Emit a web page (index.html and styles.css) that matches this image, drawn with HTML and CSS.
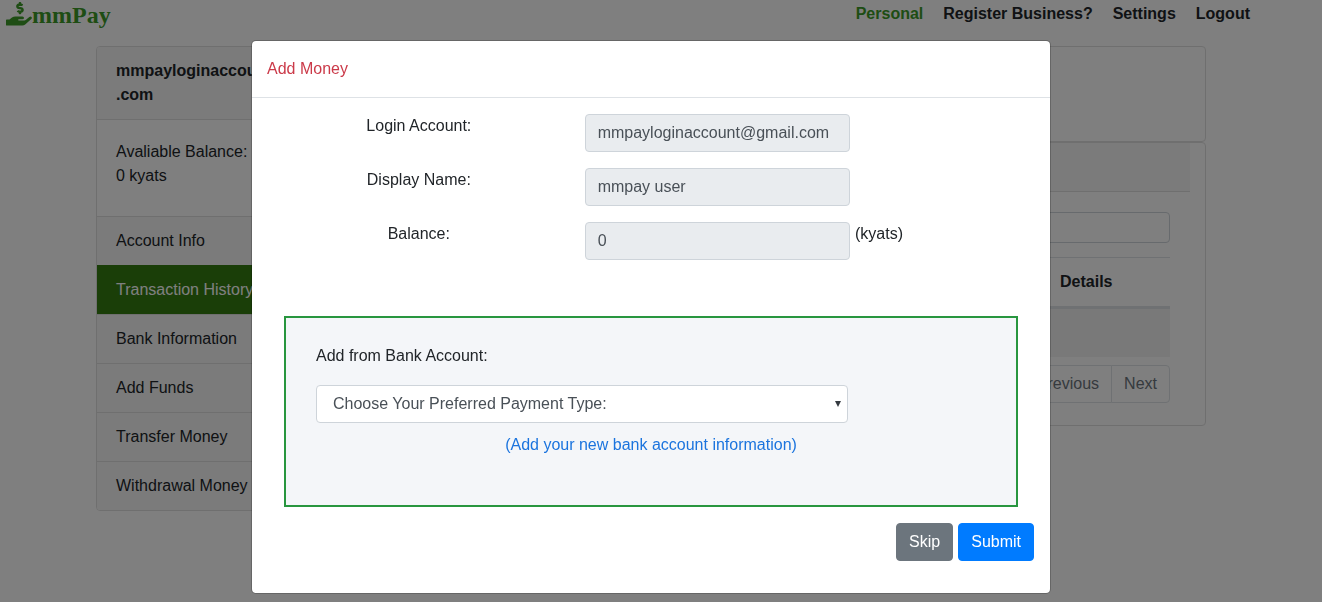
FILE: index.html
```html
<!DOCTYPE html>
<html lang="en">
<head>
<meta charset="utf-8">
<meta name="viewport" content="width=device-width, initial-scale=1">
<title>mmPay</title>
<link rel="stylesheet" href="styles.css">
</head>
<body>
<div class="page">
  <header class="topbar">
    <a class="brand" href="#">
      <svg class="brand-icon" viewBox="0 0 26 25" aria-hidden="true"><path transform="translate(-1 1) scale(.052 .048)" d="M257.600 144.300l50 14.300c3.600 1 6.100 4.400 6.100 8.100 0 4.600-3.800 8.400-8.400 8.400h-32.800c-3.600 0-7.100-.8-10.300-2.200-4.800-2.200-10.400-1.700-14.100 2l-17.500 17.500c-5.300 5.300-4.700 14.300 1.500 18.400 9.500 6.300 20.300 10.100 31.800 11.500V240c0 8.800 7.200 16 16 16h16c8.800 0 16-7.200 16-16v-17.600c30.300-3.600 53.300-31 49.300-63-2.900-23-20.700-41.300-42.900-47.700l-50-14.300c-3.600-1-6.100-4.400-6.100-8.100 0-4.600 3.800-8.400 8.400-8.400h32.800c3.600 0 7.100.8 10.300 2.200 4.800 2.200 10.400 1.700 14.100-2l17.500-17.500c5.300-5.300 4.700-14.300-1.500-18.400-9.500-6.300-20.300-10.100-31.800-11.500V16c0-8.800-7.200-16-16-16h-16c-8.800 0-16 7.200-16 16v17.600c-30.300 3.600-53.300 31-49.300 63 2.900 23 20.700 41.300 42.900 47.700z"/><path d="M.7 18.500H3.500L6 16.500Q7.500 15.400 9.300 15.400H16.500Q18 15.600 18 16.900 17.800 18.200 16.500 18.300H12.500Q12 18.900 12.500 19.400H18.300Q19.200 19.400 20 18.800L23.300 16.100Q24.500 15.200 25.500 16 26.300 17 25.300 18L19.500 23.200Q18 24.600 16.200 24.600H.7Q0 24.600 0 23.900V19.200Q0 18.500.7 18.500z"/></svg><span>mmPay</span>
    </a>
    <nav class="topnav">
      <a class="current" href="#">Personal</a>
      <a href="#">Register Business?</a>
      <a href="#">Settings</a>
      <a href="#">Logout</a>
    </nav>
  </header>

  <div class="container">
    <aside class="card sidebar">
      <div class="account">mmpayloginaccount@gmail<wbr>.com</div>
      <div class="available">Avaliable Balance:<br>0 kyats</div>
      <nav class="menu">
        <a href="#">Account Info</a>
        <a class="active" href="#">Transaction History</a>
        <a href="#">Bank Information</a>
        <a href="#">Add Funds</a>
        <a href="#">Transfer Money</a>
        <a href="#">Withdrawal Money</a>
      </nav>
    </aside>

    <main class="content">
      <section class="card summary"></section>
      <section class="card history">
        <div class="history-head"></div>
        <div class="history-body">
          <input class="search" type="search" aria-label="Search">
          <table class="records">
            <thead><tr><th></th><th class="details">Details</th></tr></thead>
            <tbody><tr><td colspan="2"></td></tr></tbody>
          </table>
          <div class="pager">
            <button type="button">Previous</button>
            <button type="button">Next</button>
          </div>
        </div>
      </section>
    </main>
  </div>
</div>

<div class="backdrop">
  <form class="modal" role="dialog" aria-labelledby="modal-title">
    <h1 class="modal-title" id="modal-title">Add Money</h1>
    <div class="modal-body">
      <div class="fields">
        <label for="login">Login Account:</label>
        <input id="login" type="text" value="mmpayloginaccount@gmail.com" readonly>
        <span></span>
        <label for="name">Display Name:</label>
        <input id="name" type="text" value="mmpay user" readonly>
        <span></span>
        <label for="balance">Balance:</label>
        <input id="balance" type="text" value="0" readonly>
        <span>(kyats)</span>
      </div>
      <div class="bank">
        <label for="bank">Add from Bank Account:</label>
        <div class="select-wrap">
          <select id="bank"><option>Choose Your Preferred Payment Type:</option></select>
          <svg class="arrow" viewBox="0 0 6 6" aria-hidden="true"><path d="M0 0h6L3 6z"/></svg>
        </div>
        <a href="#">(Add your new bank account information)</a>
      </div>
      <div class="actions">
        <button class="skip" type="button">Skip</button>
        <button class="submit" type="submit">Submit</button>
      </div>
    </div>
  </form>
</div>
</body>
</html>
```

FILE: styles.css
```css
*, *::before, *::after { box-sizing: border-box; }

body {
  margin: 0;
  font: 16px/24px "Liberation Sans", Arial, sans-serif;
  color: #212529;
  background: #fff;
}

a { color: inherit; text-decoration: none; }

input, select, button { font: inherit; color: inherit; margin: 0; }

.page { padding-right: 20px; }

/* Top bar */
.topbar {
  display: flex;
  justify-content: space-between;
  align-items: flex-start;
  height: 46px;
  padding: 1px 52px 0 6px;
}

.brand {
  display: flex;
  color: #3c9a28;
  font: bold 24px/28px "Liberation Serif", "Times New Roman", serif;
}

.brand-icon { width: 26px; height: 25px; fill: currentColor; }

.topnav { display: flex; gap: 20px; font-weight: bold; line-height: 26px; }
.topnav .current { color: #3c9a28; }

/* Account page */
.container {
  display: grid;
  grid-template-columns: 1fr 3fr;
  align-items: start;
  max-width: 1110px;
  margin: 0 auto;
}

.card {
  border: 1px solid #dfdfdf;
  border-radius: 4px;
  background: #fff;
  overflow: hidden;
}

.sidebar { margin-right: 15px; }

.account {
  padding: 12px 19px;
  font-weight: bold;
  background: #f7f7f7;
  border-bottom: 1px solid #dfdfdf;
}

.available { padding: 20px 19px 28px; }

.menu a {
  display: block;
  padding: 12px 19px;
  border-top: 1px solid #dfdfdf;
  background: #f7f7f7;
  white-space: nowrap;
}

.menu .active { color: #fff; background: #347c10; border-color: #347c10; }

.content { margin-left: 15px; }

.summary { height: 96px; }

.history { padding: 0 15px; }

.history-head {
  height: 49px;
  background: #f7f7f7;
  border-bottom: 1px solid #dfdfdf;
}

.history-body { padding: 20px 20px 22px; }

.search {
  display: block;
  width: 240px;
  height: 31px;
  margin: 0 0 14px auto;
  border: 1px solid #ced4da;
  border-radius: 4px;
  background: #fff;
}

.records { width: 100%; border-collapse: separate; border-spacing: 0; }
.records th {
  padding: 12px 30px 12px 12px;
  text-align: left;
  border-top: 1px solid #dee2e6;
  border-bottom: 3px solid #dee2e6;
}
.records .details { width: 122px; }
.records td { height: 48px; padding: 0; background: #f2f2f2; }

.pager { display: flex; justify-content: flex-end; margin-top: 8px; }
.pager button {
  padding: 6px 12px;
  border: 1px solid #dee2e6;
  border-radius: 4px 0 0 4px;
  background: #fff;
  color: #6c757d;
}
.pager button + button { margin-left: -1px; border-radius: 0 4px 4px 0; }

/* Modal */
.backdrop {
  position: fixed;
  inset: 0;
  padding: 40px 20px 8px 0;
  overflow: auto;
  background: rgba(0, 0, 0, 0.5);
}

.modal {
  max-width: 800px;
  margin: 0 auto;
  border: 1px solid rgba(0, 0, 0, 0.2);
  border-radius: 5px;
  background: #fff;
  background-clip: padding-box;
}

.modal-title {
  margin: 0;
  padding: 16px 15px;
  border-bottom: 1px solid #dee2e6;
  font-size: 16px;
  font-weight: normal;
  line-height: 24px;
  color: #cb3a49;
}

.modal-body { padding: 16px 16px 32px; }

.fields {
  display: grid;
  grid-template-columns: 5fr 4fr 3fr;
  row-gap: 16px;
  margin: 0 -15px 56px;
}

.fields label { text-align: center; }
.fields span { padding-left: 5px; }

.fields input {
  width: 100%;
  height: 38px;
  padding: 6px 12px;
  border: 1px solid #ced4da;
  border-radius: 4px;
  background: #e9ecef;
  color: #495057;
}

.bank {
  margin: 0 16px 16px;
  padding: 26px 30px 48px;
  border: 2px solid #28963f;
  background: #f4f6f9;
}

.bank label { display: block; margin-bottom: 17px; }

.select-wrap { position: relative; max-width: 532px; margin-bottom: 10px; }

.bank select {
  appearance: none;
  display: block;
  width: 100%;
  height: 38px;
  padding: 6px 16px;
  border: 1px solid #ced4da;
  border-radius: 4px;
  background: #fff;
  color: #495057;
}

.arrow {
  position: absolute;
  top: 16px;
  right: 7px;
  width: 6px;
  height: 6px;
  fill: #343a40;
}

.bank a { display: block; text-align: center; color: #1b74de; }

.actions { display: flex; justify-content: flex-end; gap: 5px; }

.actions button {
  padding: 6px 12px;
  border: 1px solid transparent;
  border-radius: 4px;
  color: #fff;
}

.actions .skip { background: #6c757d; border-color: #6c757d; }
.actions .submit { background: #007bff; border-color: #007bff; }
```
